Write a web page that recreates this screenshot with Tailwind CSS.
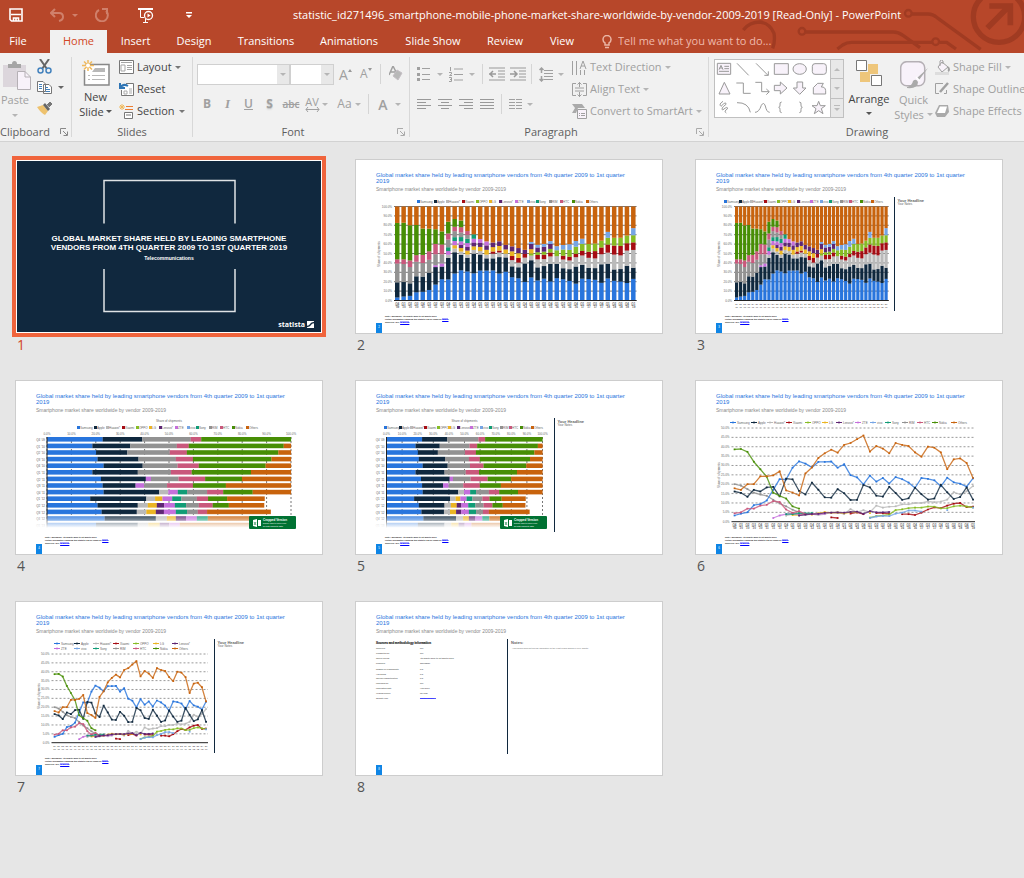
<!DOCTYPE html>
<html lang="en">

<head>
    <meta charset="UTF-8">
    <meta name="viewport" content="width=device-width, initial-scale=1.0">
    <title>PowerPoint - Slide Sorter</title>
    <script src="https://cdn.jsdelivr.net/npm/@tailwindcss/browser@4"></script>
</head>

<body class="min-h-screen overflow-x-hidden bg-[#e6e6e6] font-['Open_Sans','Noto_Sans',sans-serif] text-[11px] text-[#444]">

    <!-- Title bar and tabs -->
    <header class="relative overflow-hidden bg-[#b7472a] text-white">
        <svg class="absolute top-0 right-0 h-[53px] w-[344px]" viewBox="0 0 1032 159" fill="none" stroke="#a03b22" stroke-width="10">
            <circle cx="366" cy="94" r="10" stroke-width="7" />
            <path d="M377 96H640Q655 96 670 107L720 143" />
            <circle cx="685" cy="40" r="10" stroke-width="7" />
            <path d="M696 42H745Q758 42 770 52L902 148" />
            <circle cx="767" cy="125" r="10" stroke-width="7" />
            <path d="M756 127H515Q500 127 488 135L472 147M778 127H800L828 147" />
            <path d="M190 90Q208 66 240 66Q270 70 282 100Q286 125 278 145" />
            <circle cx="957" cy="50" r="77" stroke-width="16" />
            <path d="M922 84L984 22M928 18H991V76" stroke-width="17" />
        </svg>

        <div class="relative flex h-[30px] items-center">
            <div class="flex w-[170px] shrink-0 items-center pl-[9px]">
                <button aria-label="Save"><svg class="h-[14px] w-[14px]" viewBox="0 0 14 14" fill="none" stroke="#fff"><path d="M1 1H13V13H2.500L1 11.500Z" stroke-width="1.600" /><path d="M2 6.500H12M4.500 13V10H9.500V13M7 10V13" stroke-width="1.600" /></svg></button>
                <button aria-label="Undo" class="ml-[27px]"><svg class="h-[14px] w-[14px]" viewBox="0 0 14 14" fill="none" stroke="#d0806b" stroke-width="2"><path d="M5 1L1 5L5 9M1 5H9Q13 5 13 9Q13 12 9 13" /></svg></button>
                <span class="ml-[8px] border-x-[3px] border-t-[3px] border-x-transparent border-t-[#d0806b]"></span>
                <button aria-label="Redo" class="ml-[17px]"><svg class="h-[14px] w-[14px]" viewBox="0 0 14 14" fill="none" stroke="#d0806b" stroke-width="2"><path d="M4 2A6 6 0 1 0 11 3M7 1H12V6" /></svg></button>
                <button aria-label="Start From Beginning" class="ml-[29px]"><svg class="h-[15px] w-[16px]" viewBox="0 0 16 15" fill="none" stroke="#fff"><path d="M0 1H15" stroke-width="2" /><path d="M2.500 2V9.500H6M7.500 11V14M5 14.500H10" /><circle cx="10.500" cy="7.500" r="4" stroke-width="1.300" /><path d="M9.500 5.500V9.500L12.500 7.500Z" fill="#fff" stroke="none" /></svg></button>
            </div>
            <button aria-label="Customize Quick Access Toolbar" class="absolute left-[186px]"><svg class="h-[7px] w-[6px]" viewBox="0 0 6 7"><path d="M0 0H6V1.500H0ZM0 3H6L3 6Z" fill="#fff" /></svg></button>
            <h1 class="flex-1 text-center whitespace-nowrap">statistic_id271496_smartphone-mobile-phone-market-share-worldwide-by-vendor-2009-2019 [Read-Only] - PowerPoint</h1>
        </div>

        <nav class="relative flex h-[23px] items-center" aria-label="Tabs">
            <button class="w-[50px] pr-[14px] text-center">File</button>
            <button class="h-[23px] w-[57px] bg-[#f1f1f1] text-[#d24726]">Home</button>
            <button class="w-[57px]">Insert</button>
            <button class="w-[60px]">Design</button>
            <button class="w-[84px]">Transitions</button>
            <button class="w-[82px]">Animations</button>
            <button class="w-[86px]">Slide Show</button>
            <button class="w-[58px]">Review</button>
            <button class="w-[56px]">View</button>
            <svg class="ml-[12px] h-[14px] w-[10px]" viewBox="0 0 10 14" fill="none" stroke="#eab5a5" stroke-width="1.500"><path d="M3 10V8Q1 7 1 4.500A4 4 0 0 1 9 4.500Q9 7 7 8V10ZM3 12.500H7" /></svg>
            <input aria-label="Tell me" type="text" placeholder="Tell me what you want to do..." class="ml-[6px] w-[180px] bg-transparent outline-none placeholder:text-[#efb9aa]">
        </nav>
    </header>

    <!-- Ribbon -->
    <section class="flex h-[89px] overflow-hidden border-b border-[#d2d2d2] bg-[#f1f1f1] whitespace-nowrap" aria-label="Ribbon">

        <div class="flex w-[71px] shrink-0 flex-col">
            <div class="flex h-[70px]">
                <button class="flex w-[30px] flex-col items-center pt-[8px] text-[#a0a0a0]">
                    <svg class="ml-[3px] h-[29px] w-[28px]" viewBox="0 0 28 29"><path d="M0 4H23V26H0Z" fill="#dcd6dc" /><path d="M5 3H9Q9 0 11.500 0Q14 0 14 3H18V7H5Z" fill="#a5a5a5" /><path d="M14.500 10.500H22L27.500 16V28.500H14.500Z" fill="#f8f2fa" stroke="#b5b0b5" /><path d="M22 10.500V16H27.500" fill="none" stroke="#b5b0b5" /></svg>
                    <span class="leading-[20px]">Paste</span>
                    <span class="mt-[4px] border-x-[3px] border-t-[3px] border-x-transparent border-t-[#b5b5b5]"></span>
                </button>
                <div class="flex flex-col gap-[6px] pt-[6px] pl-[7px]">
                    <button aria-label="Cut"><svg class="h-[15px] w-[15px]" viewBox="0 0 15 15" fill="none"><path d="M3 0L10 10M12 0L5 10" stroke="#666" stroke-width="2" /><circle cx="3.500" cy="11.500" r="2.500" stroke="#4382bd" stroke-width="1.500" /><circle cx="11.500" cy="11.500" r="2.500" stroke="#4382bd" stroke-width="1.500" /></svg></button>
                    <button aria-label="Copy" class="flex items-center gap-[5px]"><svg class="h-[15px] w-[16px]" viewBox="0 0 16 15" fill="#fff" stroke="#777"><path d="M.5 1.500H6L8.500 4V11.500H.5ZM6.500 4.500H12L14.500 7V13.500H6.500Z" /><path d="M2 4.500H5M2 6.500H5M2 8.500H5M8.500 7.500H11M8.500 9.500H13M8.500 11.500H13" stroke="#4382bd" /></svg><span class="border-x-[3px] border-t-[3px] border-x-transparent border-t-[#666]"></span></button>
                    <button aria-label="Format Painter"><svg class="h-[15px] w-[16px]" viewBox="0 0 16 15"><path d="M0 6L6 4L11 10L8 14Q4 12 0 6Z" fill="#eec26e" /><path d="M6 4L8 2L13 8L11 10Z" fill="#666" /><path d="M10 4L13 1L15 3L12 6" fill="#777" stroke="#777" /></svg></button>
                </div>
            </div>
            <div class="flex items-center justify-between pr-[3px] leading-[19px] text-[#5e5e5e]"><span>Clipboard</span><svg class="h-[8px] w-[8px]" viewBox="0 0 8 8" fill="none" stroke="#888"><path d="M.5 6V.5H6M3 3L7 7M7.500 3.500V7.500H3.500" /></svg></div>
        </div>

        <div class="my-[4px] w-px shrink-0 bg-[#d8d8d8]"></div>
        <div class="flex w-[120px] shrink-0 flex-col">
            <div class="flex h-[70px]">
                <button class="flex w-[47px] flex-col items-center pt-[7px] leading-[15px]">
                    <svg class="mb-[3px] h-[26px] w-[28px]" viewBox="0 0 28 26" fill="none"><path d="M3.500 4.500H27V25H2.500V10" fill="#fff" stroke="#888" stroke-width="1.500" /><path d="M13 8H23V12H10ZM6 15H8V16H6ZM10 15H23V16H10ZM6 19H8V20H6ZM10 19H23V20H10Z" fill="#b8b8b8" /><path d="M6 0V11M0 5.500H12M2 1.500L10 9.500M10 1.500L2 9.500" stroke="#f0b95c" stroke-width="1.500" /><circle cx="6" cy="5.500" r="2" fill="#fff" /></svg>
                    <span>New</span>
                    <span class="flex items-center gap-[2px]">Slide <i class="border-x-[3px] border-t-[3px] border-x-transparent border-t-[#555]"></i></span>
                </button>
                <div class="flex flex-col pt-[3px]">
                    <button class="flex h-[22px] items-center gap-[3px]"><svg class="h-[14px] w-[15px]" viewBox="0 0 15 14" fill="none" stroke="#777"><path d="M.5.5H14.500V13.500H.5Z" fill="#fff" /><path d="M2 2.500H13M2 5H6V11H2ZM8 5.500H13M8 7.500H13M8 9.500H13" stroke="#a5a5a5" /></svg>Layout<i class="border-x-[3px] border-t-[3px] border-x-transparent border-t-[#777]"></i></button>
                    <button class="flex h-[22px] items-center gap-[3px]"><svg class="h-[14px] w-[15px]" viewBox="0 0 15 14" fill="none"><path d="M7 1.500H14.500V13.500H2.500V8" fill="#fff" stroke="#777" /><path d="M5 9H8V12H5ZM10 7H13M10 9H13M10 11H13" stroke="#aaa" /><path d="M1 1V6H6M1 6Q4 1 9 4" stroke="#2f75b5" stroke-width="2" /></svg>Reset</button>
                    <button class="flex h-[22px] items-center gap-[3px]"><svg class="h-[15px] w-[15px]" viewBox="0 0 15 15" fill="none"><path d="M7 2.500H14M6 5.500H14" stroke="#ed7d31" /><path d="M5.500 8.500H13.500V14.500H5.500ZM7 11H12" fill="#fff" stroke="#777" /><path d="M3 0V6M0 3H6M1 1L5 5M5 1L1 5" stroke="#f0b95c" /></svg>Section<i class="ml-px border-x-[3px] border-t-[3px] border-x-transparent border-t-[#777]"></i></button>
                </div>
            </div>
            <div class="text-center leading-[19px] text-[#5e5e5e]">Slides</div>
        </div>

        <div class="my-[4px] w-px shrink-0 bg-[#d8d8d8]"></div>
        <div class="flex w-[216px] shrink-0 flex-col text-[#a0a0a0]">
            <div class="h-[70px] pl-[4px]">
                <div class="flex h-[42px] items-center">
                    <div class="relative h-[21px] w-[93px]">
                        <select aria-label="Font" class="h-full w-full appearance-none border border-[#d0d0d0] bg-white"></select>
                        <span class="pointer-events-none absolute top-px right-px flex h-[19px] w-[12px] items-center justify-center bg-[#e8e8e8]"><i class="border-x-[3px] border-t-[3px] border-x-transparent border-t-[#b5b5b5]"></i></span>
                    </div>
                    <div class="relative h-[21px] w-[44px]">
                        <select aria-label="Font size" class="h-full w-full appearance-none border border-[#d0d0d0] bg-white"></select>
                        <span class="pointer-events-none absolute top-px right-px flex h-[19px] w-[12px] items-center justify-center bg-[#e8e8e8]"><i class="border-x-[3px] border-t-[3px] border-x-transparent border-t-[#b5b5b5]"></i></span>
                    </div>
                    <button class="ml-[5px] flex w-[14px] text-[14px]">A<i class="mt-[5px] h-0 border-x-[2px] border-b-[3px] border-x-transparent border-b-[#999]"></i></button>
                    <button class="ml-[7px] flex w-[14px] text-[12px]">A<i class="mt-[3px] h-0 border-x-[2px] border-t-[3px] border-x-transparent border-t-[#999]"></i></button>
                    <span class="ml-[6px] h-[20px] w-px bg-[#d5d5d5]"></span>
                    <button aria-label="Clear formatting" class="ml-[8px]"><svg class="h-[16px] w-[14px]" viewBox="0 0 14 16" fill="none" stroke="#a0a0a0"><path d="M0 9L4 0L8 8M2 6H6" stroke-width="1.500" /><path d="M8 4L13 7L9 14L4 10Z" fill="#b8b8b8" stroke="#c5bfc5" /></svg></button>
                </div>
                <div class="flex h-[18px] items-center text-[12px]">
                    <button class="w-[20px] font-bold">B</button>
                    <button class="w-[21px] font-['Liberation_Serif',serif] text-[13px] font-bold italic">I</button>
                    <button class="w-[21px] font-semibold underline">U</button>
                    <button class="w-[21px] font-bold text-shadow-sm">S</button>
                    <button class="w-[22px] text-[10px] font-semibold line-through">abc</button>
                    <button class="flex w-[20px] flex-col items-center text-[11px] leading-[11px]">AV<svg class="h-[5px] w-[15px]" viewBox="0 0 15 5" fill="none" stroke="#a0a0a0"><path d="M3 0L1 2.500L3 5M12 0L14 2.500L12 5M1 2.500H14" /></svg></button>
                    <i class="border-x-[3px] border-t-[3px] border-x-transparent border-t-[#b5b5b5]"></i>
                    <button class="ml-[6px] w-[21px]">Aa</button>
                    <i class="border-x-[3px] border-t-[3px] border-x-transparent border-t-[#b5b5b5]"></i>
                    <span class="ml-[7px] h-[20px] w-px bg-[#d5d5d5]"></span>
                    <button class="ml-[7px] w-[14px] text-[14px] font-semibold">A</button>
                    <i class="ml-[5px] border-x-[3px] border-t-[3px] border-x-transparent border-t-[#b5b5b5]"></i>
                </div>
            </div>
            <div class="flex items-center pr-[4px] leading-[19px] text-[#5e5e5e]"><span class="flex-1 pr-[4px] text-center">Font</span><svg class="h-[8px] w-[8px]" viewBox="0 0 8 8" fill="none" stroke="#aaa"><path d="M.5 6V.5H6M3 3L7 7M7.500 3.500V7.500H3.500" /></svg></div>
        </div>

        <div class="my-[4px] w-px shrink-0 bg-[#d8d8d8]"></div>
        <div class="flex w-[298px] shrink-0 flex-col text-[#a0a0a0]">
            <div class="flex h-[70px] pl-[7px]">
                <div class="w-[155px] shrink-0">
                    <div class="flex h-[42px] items-center">
                        <button aria-label="Bullets"><svg class="h-[14px] w-[13px]" viewBox="0 0 13 14" fill="#a0a0a0"><path d="M0 0H3V3H0ZM0 6H3V9H0ZM0 11H3V14H0ZM5 1H13V2H5ZM5 7H13V8H5ZM5 12H13V13H5Z" /></svg></button>
                        <i class="ml-[7px] border-x-[3px] border-t-[3px] border-x-transparent border-t-[#b5b5b5]"></i>
                        <button aria-label="Numbering" class="ml-[6px]"><svg class="h-[15px] w-[14px]" viewBox="0 0 14 15" fill="none" stroke="#a0a0a0"><path d="M1.500 0V4M0 5.500H2.500V7L.5 8.500H3M0 10.500H2.500V14.500H0M1 12.500H2.500M5 2H14M5 7.500H14M5 13H14" /></svg></button>
                        <i class="ml-[6px] border-x-[3px] border-t-[3px] border-x-transparent border-t-[#b5b5b5]"></i>
                        <span class="ml-[7px] h-[20px] w-px bg-[#d5d5d5]"></span>
                        <button aria-label="Decrease indent" class="ml-[6px]"><svg class="h-[14px] w-[16px]" viewBox="0 0 16 14" fill="none" stroke="#999"><path d="M0 1H16M9 4H16M9 7H16M9 10H16M0 13H16" /><path d="M0 7H7M4 4L1 7L4 10" stroke-width="1.500" /></svg></button>
                        <button aria-label="Increase indent" class="ml-[5px]"><svg class="h-[14px] w-[16px]" viewBox="0 0 16 14" fill="none" stroke="#999"><path d="M0 1H16M9 4H16M9 7H16M9 10H16M0 13H16" /><path d="M0 7H7M4 4L7 7L4 10" stroke-width="1.500" /></svg></button>
                        <span class="ml-[5px] h-[20px] w-px bg-[#d5d5d5]"></span>
                        <button aria-label="Line spacing" class="ml-[7px]"><svg class="h-[15px] w-[14px]" viewBox="0 0 14 15" fill="none" stroke="#a0a0a0"><path d="M2.500 1V6M.5 3L2.500 1L4.500 3M2.500 9V14M.5 12L2.500 14L4.500 12" stroke-width="1.500" /><path d="M5 3.500H14M5 6.500H14M5 9.500H14M5 12.500H14" /></svg></button>
                        <i class="ml-[5px] border-x-[3px] border-t-[3px] border-x-transparent border-t-[#b5b5b5]"></i>
                    </div>
                    <div class="flex h-[18px] items-center">
                        <button aria-label="Align left"><svg class="h-[11px] w-[14px]" viewBox="0 0 14 11" stroke="#999"><path d="M0 .5H14M0 3.500H9M0 6.500H14M0 9.500H9" /></svg></button>
                        <button aria-label="Center" class="ml-[7px]"><svg class="h-[11px] w-[14px]" viewBox="0 0 14 11" stroke="#999"><path d="M0 .5H14M3 3.500H11M0 6.500H14M3 9.500H11" /></svg></button>
                        <button aria-label="Align right" class="ml-[7px]"><svg class="h-[11px] w-[14px]" viewBox="0 0 14 11" stroke="#999"><path d="M0 .5H14M5 3.500H14M0 6.500H14M5 9.500H14" /></svg></button>
                        <button aria-label="Justify" class="ml-[7px]"><svg class="h-[11px] w-[14px]" viewBox="0 0 14 11" stroke="#999"><path d="M0 .5H14M0 3.500H14M0 6.500H14M0 9.500H14" /></svg></button>
                        <span class="ml-[7px] h-[20px] w-px bg-[#d5d5d5]"></span>
                        <button aria-label="Columns" class="ml-[7px]"><svg class="h-[11px] w-[13px]" viewBox="0 0 13 11" stroke="#a0a0a0"><path d="M0 .5H6M7 .5H13M0 3.500H6M7 3.500H13M0 6.500H6M7 6.500H13M0 9.500H6M7 9.500H13" /></svg></button>
                        <i class="ml-[5px] border-x-[3px] border-t-[3px] border-x-transparent border-t-[#b5b5b5]"></i>
                    </div>
                </div>
                <div class="flex flex-col pt-[3px]">
                    <button class="flex h-[22px] items-center gap-[3px]"><svg class="h-[15px] w-[15px]" viewBox="0 0 15 15" fill="none" stroke="#a0a0a0"><path d="M.5 1V15M4.500 1V15M8 9L11 1L14 9M9 6H13M8.500 10V15M12.500 10V15" /></svg>Text Direction<i class="border-x-[3px] border-t-[3px] border-x-transparent border-t-[#b5b5b5]"></i></button>
                    <button class="flex h-[22px] items-center gap-[3px]"><svg class="h-[15px] w-[15px]" viewBox="0 0 15 15" fill="none" stroke="#a0a0a0"><path d="M4 1.500H.5V13.500H4M11 1.500H14.500V13.500H11M7.500 0V5M5.500 2.500L7.500.5L9.500 2.500M7.500 10V15M5.500 12.500L7.500 14.500L9.500 12.500M3 6H12M3 9H12" /></svg>Align Text<i class="border-x-[3px] border-t-[3px] border-x-transparent border-t-[#b5b5b5]"></i></button>
                    <button class="flex h-[22px] items-center gap-[3px]"><svg class="h-[15px] w-[15px]" viewBox="0 0 15 15"><path d="M0 0H10L13 4H6L4 9H0L3 4Z" fill="#aaa" /><path d="M5.500 5.500H14.500V14.500H5.500Z" fill="#f8f2fa" stroke="#a0a0a0" /><path d="M7 9H8V10H7ZM9 9H13V10H9ZM7 11H8V12H7ZM9 11H13V12H9Z" fill="#a0a0a0" /></svg>Convert to SmartArt<i class="border-x-[3px] border-t-[3px] border-x-transparent border-t-[#b5b5b5]"></i></button>
                </div>
            </div>
            <div class="flex items-center pr-[4px] leading-[19px] text-[#5e5e5e]"><span class="flex-1 pr-[4px] text-center">Paragraph</span><svg class="h-[8px] w-[8px]" viewBox="0 0 8 8" fill="none" stroke="#aaa"><path d="M.5 6V.5H6M3 3L7 7M7.500 3.500V7.500H3.500" /></svg></div>
        </div>

        <div class="my-[4px] w-px shrink-0 bg-[#d8d8d8]"></div>
        <div class="flex w-[316px] flex-1 flex-col text-[#a0a0a0]">
            <div class="flex h-[70px] pl-[5px]">
                <div class="mt-[6px] flex h-[59px] w-[130px] shrink-0 border border-[#c0c0c0]">
                    <svg class="h-[57px] w-[115px] bg-white" viewBox="106 180 345 171" fill="#f8f2fa" stroke="#999" stroke-width="3">
                        <path d="M113 190H153V223H113ZM134 199H148M134 206H148M118 214H148" /><path d="M118 209L124 196L130 209M120 204H128" fill="none" />
                        <path d="M172 190L207 226M229 190L265 226M254 226H266V214" fill="none" />
                        <path d="M284 191H326V223H284Z" /><ellipse cx="360" cy="207" rx="20" ry="16" /><rect x="398" y="191" width="42" height="32" rx="8" />
                        <path d="M134 247L151 282H118Z" /><path d="M170 249H191V280H213M227 247H246V275H268M260 267L269 275L260 284" fill="none" />
                        <path d="M284 256H302V246L322 264L302 282V272H284ZM352 246H369V264H379L360 283L341 264H352ZM401 282V263L414 250H431L425 261Q437 260 438 272V282Z" />
                        <path d="M130 304Q116 313 124 319Q140 302 139 313Q122 326 129 330Q146 316 143 327Q131 334 140 339M172 308Q206 307 212 337M226 337Q238 337 245 316Q252 304 257 318Q261 337 270 337M306 306Q299 306 301 315Q302 321 297 322Q302 323 301 329Q299 338 306 338M359 306Q366 306 364 315Q363 321 368 322Q363 323 364 329Q366 338 359 338" fill="none" />
                        <path d="M417 304L422 317H437L425 326L430 341L417 332L404 341L409 326L397 317H412Z" />
                    </svg>
                    <div class="flex w-[13px] flex-col divide-y divide-[#c0c0c0] border-l border-[#c0c0c0] bg-[#e8e8e8]">
                        <button aria-label="Row up" class="flex flex-1 items-center justify-center"><i class="border-x-[3px] border-b-[3px] border-x-transparent border-b-[#bbb]"></i></button>
                        <button aria-label="Row down" class="flex flex-1 items-center justify-center"><i class="border-x-[3px] border-t-[3px] border-x-transparent border-t-[#bbb]"></i></button>
                        <button aria-label="More shapes" class="flex flex-1 flex-col items-center justify-center gap-[2px]"><b class="h-px w-[6px] bg-[#bbb]"></b><i class="border-x-[3px] border-t-[3px] border-x-transparent border-t-[#bbb]"></i></button>
                    </div>
                </div>
                <button class="ml-[2px] flex w-[46px] shrink-0 flex-col items-center pt-[7px] leading-[15px] text-[#444]">
                    <svg class="mb-[4px] h-[27px] w-[26px]" viewBox="0 0 26 27"><path d="M12 4H22V14H12ZM4 12H14V22H4Z" fill="#eec67b" /><path d="M.5.5H10.500V10.500H.5ZM15.500 15.500H25.500V25.500H15.500Z" fill="#fff" stroke="#777" /></svg>
                    <span>Arrange</span>
                    <i class="mt-[6px] border-x-[3px] border-t-[3px] border-x-transparent border-t-[#555]"></i>
                </button>
                <button class="flex w-[43px] shrink-0 flex-col items-center pt-[8px] leading-[15px]">
                    <svg class="mb-[3px] h-[28px] w-[28px]" viewBox="0 0 28 28"><rect x=".7" y=".7" width="24" height="24" rx="6" fill="#f8f2fa" stroke="#b5b0b5" stroke-width="1.500" /><path d="M28 7L19 19L17 17ZM7 26Q12 25 13 20Q16 17 18 21Q18 28 7 27Z" fill="#aaa" /><path d="M16 16L20 20" stroke="#fff" stroke-width="1.500" /></svg>
                    <span>Quick</span>
                    <span class="flex items-center gap-[3px]">Styles<i class="border-x-[3px] border-t-[3px] border-x-transparent border-t-[#b5b5b5]"></i></span>
                </button>
                <div class="flex flex-col pt-[3px]">
                    <button class="flex h-[22px] items-center gap-[3px]"><svg class="h-[15px] w-[15px]" viewBox="0 0 15 15" fill="none" stroke="#a0a0a0"><path d="M7 2L13 7L7 12L3 7ZM5 6V1Q6.500-1 8 1V4" fill="#f8f2fa" /><path d="M13 7Q15 10 13 11" stroke-width="2" /><path d="M0 13.500H14" stroke="#ddd" stroke-width="3" /></svg>Shape Fill<i class="border-x-[3px] border-t-[3px] border-x-transparent border-t-[#b5b5b5]"></i></button>
                    <button class="flex h-[22px] items-center gap-[3px]"><svg class="h-[14px] w-[15px]" viewBox="0 0 15 14" fill="none" stroke="#a0a0a0"><path d="M8 1.500H.5V11.500H4M9 11.500H11.500V8" /><path d="M5 10L13 1" stroke-width="2.500" /></svg>Shape Outline</button>
                    <button class="flex h-[22px] items-center gap-[3px]"><svg class="h-[13px] w-[15px]" viewBox="0 0 15 13"><path d="M4 0H13L14 7L10 12H2L0 8Z" fill="#aaa" /><path d="M5 1.500H12L10 8H2Z" fill="#fff" /></svg>Shape Effects</button>
                </div>
            </div>
            <div class="text-center leading-[19px] text-[#5e5e5e]">Drawing</div>
        </div>
    </section>

    <!-- Slide sorter -->
    <main>
        <ol id="slides" class="flex flex-wrap gap-x-[32px] pt-[17px] pl-[15px]">
            <li class="h-[221px] w-[308px]">
                <article class="relative h-[175px] border-2 border-white bg-[#10283e] font-['Liberation_Sans',sans-serif] font-bold text-white outline-4 -outline-offset-1 outline-[#f0643c]">
                    <svg class="absolute inset-0 h-full w-full" viewBox="2 2 304 171" fill="none" stroke="#dfe3e6" stroke-width="1.500"><path d="M89 64.500V21.500H220V64.500M89 110V152.500H220V110" /></svg>
                    <div class="relative flex h-full flex-col items-center pt-[73px] text-center">
                        <h2 class="text-[8px] leading-[9px]">GLOBAL MARKET SHARE HELD BY LEADING SMARTPHONE<br>VENDORS FROM 4TH QUARTER 2009 TO 1ST QUARTER 2019</h2>
                        <p class="mt-[3px] text-[5px] leading-[6px]">Telecommunications</p>
                        <div class="mt-auto mr-[7px] mb-[3px] flex items-center gap-[2px] self-end font-['Open_Sans',sans-serif] text-[7px] leading-[9px]">statista<svg class="h-[7px] w-[7px]" viewBox="0 0 7 7"><path d="M0 0H7V7H0Z" fill="#fff" /><path d="M0 5.500Q3 5 3.500 3.500Q4 2 7 1.500" stroke="#10283e" stroke-width="1.500" fill="none" /></svg></div>
                    </div>
                </article>
                <p class="pl-[2px] text-[14px] leading-[21px] text-[#d24726]">1</p>
            </li>
        </ol>
    </main>

    <script>
        const vendors = ['Samsung', 'Apple', 'Huawei*', 'Xiaomi', 'OPPO', 'LG', 'Lenovo*', 'ZTE', 'vivo', 'Sony', 'RIM', 'HTC', 'Nokia', 'Others'];
        const colors = ['#2875dd', '#0f283e', '#bababa', '#a60c13', '#87bc24', '#ebb523', '#5e2673', '#c56fdc', '#76a5e5', '#119c76', '#929292', '#c9587c', '#478e05', '#c8630d'];

        // share per quarter, Q4 '09 to Q1 '19; pad() puts the values at their first quarter
        const pad = (start, list) => Array.from({ length: 38 }, (_, i) => list[i - start + 1] || 0);
        const shares = [
            pad(1, [3.3, 4.3, 5, 8.8, 9.4, 11.3, 17, 22.7, 22.5, 28.8, 32.2, 31, 29, 31.9, 31.9, 32.1, 28.8, 30.7, 24.8, 23.7, 19.9, 24.6, 21.4, 23.3, 20.4, 23.8, 22.7, 20.9, 18, 23.3, 22.9, 22.1, 18.9, 23.5, 21, 20.3, 18.7, 23.1]),
            pad(1, [16.1, 15.4, 13.3, 17, 16.1, 18.3, 18.6, 13.5, 23, 22.6, 16.5, 14.5, 20.9, 17.1, 13, 12.8, 17.4, 15.2, 11.6, 11.7, 19.6, 18.3, 13.9, 13.4, 18.6, 15.3, 11.7, 12.5, 18.2, 14.7, 11.8, 12.4, 19.7, 15.7, 12.1, 13.2, 18.3, 11.8]),
            pad(9, [3.2, 4, 3.5, 3.5, 4, 3.6, 4, 5, 5, 4, 6.7, 5, 6.2, 5, 8.6, 7.5, 8, 8.2, 9.3, 9.3, 10, 10, 10.8, 10.4, 10.7, 11.8, 15.8, 14.6, 16.2, 19]),
            pad(16, [2.3, 2, 0, 4.3, 5, 4, 0, 4.6, 4.6, 4.2, 0, 4, 4, 3.6, 4.8, 6.5, 7.7, 7.2, 8.6, 9.6, 10, 7.8, 8]),
            pad(22, [2.2, 3, 3.3, 3.8, 6.2, 6.6, 7.2, 7.5, 7.5, 8.1, 8, 7.1, 7.2, 8.2, 8.6, 8.1, 7.6]),
            pad(10, [3.5, 3.7, 4.2, 3.8, 4.5, 5.1, 4.7, 4.9, 4.5, 5, 5, 0, 4.6]),
            pad(11, [3.2, 3.8, 4.1, 4.2, 4.7, 4.8, 4.9, 4.8, 5.2, 5.4, 4.2, 5.6, 5, 5, 5.2]),
            pad(7, [2, 3.3, 4, 4.5, 3.9, 4.2, 4, 4, 4.2]),
            pad(22, [2, 2.8, 3.1, 3, 4.3, 4.8, 6, 6, 5.4, 0, 0, 0, 6.2, 0, 0, 0, 7.5]),
            pad(9, [4, 4, 4.5, 4.5, 4.6]),
            pad(1, [20, 19.2, 17.4, 15.5, 14.5, 13.8, 11.7, 9.7, 8.2, 6.4, 5, 4.2]),
            pad(1, [4.5, 5, 7, 7, 8.6, 9, 11, 10.5, 6.5, 4.7, 5.6, 4]),
            pad(1, [38.6, 38.8, 37.3, 32, 28, 24, 15.5, 13.8, 12.4, 8.2, 7]),
        ];
        const others = [17.8, 17, 20, 20, 24.2, 24.2, 24.7, 26.9, 16.7, 15.6, 14, 25.8, 29, 34, 36.5, 38.4, 36.8, 41, 42, 44, 46, 37.4, 40.4, 39, 36.5, 42, 41, 40.4, 37, 34.7, 40, 39.5, 37, 28, 33.3, 33.8, 31.3, 23.3];

        // horizontal bars: vendor indexes and cumulative ends
        const rows = [
            [[0, 1, 10, 11, 12], [22.8, 39, 58.9, 63.2, 100]],
            [[0, 1, 10, 11, 12, 13], [18.6, 34.1, 53.2, 58.1, 97, 100]],
            [[0, 1, 10, 11, 12, 13], [20.1, 32.9, 50.3, 57.3, 94.8, 100]],
            [[0, 1, 10, 11, 12, 13], [20.7, 37.5, 52.8, 59.8, 92, 100]],
            [[0, 1, 10, 11, 12, 13], [23.2, 39.2, 53.5, 62.2, 89.6, 100]],
            [[0, 1, 10, 11, 12, 13], [18.6, 37.2, 50.8, 59.3, 83.6, 100]],
            [[0, 1, 7, 10, 11, 12, 13], [22.1, 40.5, 42.6, 53.9, 64.8, 79.9, 100]],
            [[0, 1, 7, 10, 11, 12, 13], [22.8, 36.3, 39.8, 49.2, 59.8, 73.3, 100]],
            [[0, 1, 2, 7, 9, 10, 11, 12, 13], [23.2, 46, 49.7, 53.6, 57.4, 65.6, 72.2, 84.3, 100]],
            [[0, 1, 2, 5, 7, 9, 10, 11, 12, 13], [17.7, 40.7, 44.3, 47.3, 51.3, 55.1, 61.4, 66, 73.8, 89.2]],
            [[0, 1, 2, 5, 6, 7, 9, 10, 11, 12, 13], [20.7, 37.2, 41.3, 45, 48, 52.4, 57, 62.2, 67.9, 74.5, 89]],
            [[0, 1, 2, 5, 6, 7, 9, 10, 11, 13], [22.4, 36.8, 40.7, 44.6, 47.9, 52.8, 57.4, 61.8, 65.6, 91.7]],
            [[0, 1, 2, 5, 6, 7, 9, 13], [23.6, 44.6, 49.1, 52.8, 57, 61.4, 65.9, 100]],
            [[0, 1, 2, 5, 6, 7, 13], [20.1, 37.2, 41.5, 46.2, 50.1, 54.4, 100]],
        ];

        const rect = (x, y, w, h, fill) => `<rect x="${x}" y="${y}" width="${w}" height="${h}" fill="${fill}"/>`;
        const line = (x1, y1, x2, y2, stroke, extra = '') => `<path d="M${x1} ${y1}L${x2} ${y2}" stroke="${stroke}" fill="none" ${extra}/>`;
        const text = (x, y, str, size = 3, extra = '') => `<text x="${x}" y="${y}" font-size="${size}" fill="#666" ${extra}>${str}</text>`;
        const quarter = i => ['Q4', 'Q1', 'Q2', 'Q3'][i % 4];
        const year = i => "'" + String(9 + Math.floor((i + 3) / 4)).padStart(2, '0');

        const wideLegend = [62, 79, 91, 107, 121, 134, 144, 160, 172, 181, 194, 205, 217, 231];
        const slimLegend = [29, 44, 55, 69, 82, 93, 102, 115, 125, 134, 145, 154, 165, 176];

        function legend(xs, y) {
            return vendors.map((v, i) => rect(xs[i], y - 1, 3, 3, colors[i]) + text(xs[i] + 3, y + 2, v)).join('');
        }

        function headlineColumn(x) {
            return line(x, 38, x, 152, '#10283e') + text(x + 3, 43, 'Your Headline', 4, 'font-weight="bold"') + text(x + 3, 46, 'Your Notes', 3);
        }

        function labelsBelow(x0, pitch, size) {
            let out = '';
            for (let i = 0; i < 38; i++) {
                const x = x0 + i * pitch;
                out += text(x, 146, quarter(i), size, 'text-anchor="middle" font-weight="bold"') + text(x, 149, year(i), size, 'text-anchor="middle" font-weight="bold"');
            }
            return out;
        }

        function columnChart(x0, pitch, width, xs) {
            const top = 47.5, height = 94, right = x0 + pitch * 37 + width;
            let out = legend(xs, 42);
            for (let g = 0; g <= 10; g++) {
                const y = top + height * g / 10;
                out += line(x0 - 1, y, right + 1, y, '#777') + text(x0 - 3, y + 1, (100 - g * 10) + '.0%', 3, 'text-anchor="end"');
            }
            for (let i = 0; i < 38; i++) {
                const x = x0 + i * pitch;
                let sum = 0;
                shares.forEach((s, v) => {
                    if (!s[i]) return;
                    sum += s[i];
                    out += rect(x, top + height * (1 - sum / 100), width, height * s[i] / 100 + .1, colors[v]);
                });
                out += rect(x, top, width, height * (1 - sum / 100), colors[13]);
            }
            out += line(x0 - 1, 141.5, right + 1, 141.5, '#222');
            out += text(0, 0, 'Share of shipments', 3, 'transform="translate(25 108) rotate(-90)"');
            return out + labelsBelow(x0 + width / 2, pitch, pitch > 5 ? 3 : 2);
        }

        function barChart(x0, width, xs, badgeX) {
            let out = text(x0 + width / 2, 42, 'Share of shipments', 3, 'text-anchor="middle"') + legend(xs, 47);
            for (let g = 0; g <= 10; g++) {
                const x = x0 + width * g / 10;
                out += line(x, 57, x, 140, '#777', 'stroke-dasharray="2 2"') + text(x, 54.5, g * 10 + '.0%', 3, 'text-anchor="middle"');
            }
            rows.forEach(([ids, ends], r) => {
                const y = 57 + r * 6.6;
                out += text(x0 - 2, y + 4, `${quarter(r)} ${year(r)}`, 3, 'text-anchor="end"');
                ids.forEach((v, k) => {
                    const from = k ? ends[k - 1] : 0;
                    out += rect(x0 + width * from / 100, y, width * (ends[k] - from) / 100 + .1, 4.6, colors[v]);
                });
            });
            out += line(x0, 57, x0, 148, '#222');
            out += `<rect x="18" y="133" width="${x0 + width - 12}" height="20" fill="url(#fade)"/>`;
            out += `<rect x="${badgeX}" y="136" width="47" height="13" rx="1" fill="#007233"/>`;
            out += `<path d="M${badgeX + 4} 140L${badgeX + 8} 139V147L${badgeX + 4} 146ZM${badgeX + 9} 140H${badgeX + 12}V146H${badgeX + 9}Z" fill="#fff"/><path d="M${badgeX + 5} 142L${badgeX + 7} 145M${badgeX + 7} 142L${badgeX + 5} 145" stroke="#007233" stroke-width=".6"/>`;
            out += `<g fill="#fff"><text x="${badgeX + 14}" y="140.5" font-size="3" font-weight="bold">Cropped Version</text><text x="${badgeX + 14}" y="144" font-size="2">Double click to open excel</text><text x="${badgeX + 14}" y="147" font-size="2">file with complete data</text></g>`;
            return out;
        }

        function lineChart(x0, x1, top, legendAt) {
            const bottom = 141.7, pitch = (x1 - x0) / 37;
            let out = '';
            vendors.forEach((v, i) => {
                const [x, y] = legendAt(i);
                out += line(x, y, x + 6, y, colors[i]) + `<circle cx="${x + 3}" cy="${y}" r="1" fill="${colors[i]}"/>` + text(x + 7, y + 1, v);
            });
            for (let g = 0; g <= 10; g++) {
                const y = top + (bottom - top) * g / 10;
                out += line(x0 - 3, y, x1 + 2, y, g === 10 ? '#222' : '#999', g === 10 ? '' : 'stroke-dasharray="2 2"') + text(x0 - 5, y + 1, (50 - g * 5) + '.0%', 3, 'text-anchor="end"');
            }
            const pts = (s, i) => `${(x0 + i * pitch).toFixed(1)} ${(bottom - s[i] / 50 * (bottom - top)).toFixed(1)}`;
            const series = [...shares, others];
            [2, 10, 0, 1, 3, 4, 5, 8, 7, 9, 11, 6, 12, 13].forEach(v => {
                const s = series[v];
                let d = '';
                s.forEach((n, i) => { if (n) d += (i && s[i - 1] ? 'L' : 'M') + pts(s, i); });
                out += `<path d="${d}" fill="none" stroke="${colors[v]}" stroke-width="1.3" stroke-opacity=".8" stroke-linejoin="round"/>`;
                s.forEach((n, i) => { if (n) out += `<path d="M${pts(s, i)}h.1" stroke="${colors[v]}" stroke-width="1.7" stroke-linecap="square"/>`; });
            });
            out += text(0, 0, 'Share of shipments', 3, 'transform="translate(25 108) rotate(-90)"');
            return out + labelsBelow(x0, pitch, pitch > 5 ? 3 : 2);
        }

        function sourceTable() {
            const info = [['Source(s)', 'IDC', 47], ['Conducted by', 'IDC', 52], ['Survey period', '4th quarter 2009 to 1st quarter 2019', 57], ['Region(s)', 'Worldwide', 62], ['Number of respondents', 'n.a.', 68], ['Age group', 'n.a.', 73], ['Special characteristics', 'n.a.', 77], ['Published by', 'IDC', 82], ['Publication date', 'April 2019', 87], ['Original source', 'idc.com', 92]];
            return text(21, 43, 'Sources and methodology information', 3, 'font-weight="bold" stroke="#222" stroke-width=".2"')
                + info.map(([k, v, y]) => text(21, y + 1, k, 2, 'font-weight="bold"') + text(65, y + 1, v, 2, 'font-weight="bold"')).join('')
                + text(21, 98, 'Website URL', 2, 'font-weight="bold"')
                + line(65, 97.5, 81, 97.5, '#5a5aff') + '<a href="#source"><text x="65" y="98" font-size="2" fill="#1a1aff">visit the website</text></a>'
                + line(152.5, 38, 152.5, 153, '#10283e')
                + text(156, 43, 'Notes:', 4, 'font-weight="bold"')
                + text(157, 48, '* The source does not provide information on the exact vendor shares in every quarter.', 2);
        }

        const sixLegend = i => [[35, 56, 72, 91, 110, 127, 141, 160, 175, 190, 207, 222, 237, 256][i], 42.5];
        const sevenLegend = i => [[39, 59, 78, 98, 118, 138, 157][i % 7], i < 7 ? 42.5 : 47.5];
        const charts = [
            columnChart(40, 6.38, 4.5, wideLegend),
            columnChart(40, 4.04, 3.2, slimLegend) + headlineColumn(199.5),
            barChart(32, 244, wideLegend, 234),
            barChart(31.5, 156, slimLegend, 145) + headlineColumn(199.5),
            lineChart(39.5, 278, 48, sixLegend),
            lineChart(39.5, 191, 53, sevenLegend) + headlineColumn(199.5),
            sourceTable(),
        ];

        charts.forEach((chart, i) => {
            const footer = i === 6 ? '' : `<div class="pl-[3px] text-[2px] leading-[3px] font-bold text-[#222]"><p>Note*: Worldwide; 4th quarter 2009 to 1st quarter 2019</p><p>Further information regarding this statistic can be found on <a href="#page8" class="bg-[#aaaaff] text-[#0000ff] underline">page 8</a>.</p><p>Source(s): IDC; <a href="#source" class="bg-[#aaaaff] text-[#0000ff] underline">ID 271496</a></p></div>`;
            document.getElementById('slides').insertAdjacentHTML('beforeend', `
                <li class="h-[221px] w-[308px]">
                    <article class="flex h-[175px] flex-col border border-[#cdcdcd] bg-white font-['Liberation_Sans',sans-serif]">
                        <div class="h-[35px] pt-[12px] pr-[20px] pl-[20px]">
                            <h2 class="text-[6px] leading-[6px] text-[#2875dd]">Global market share held by leading smartphone vendors from 4th quarter 2009 to 1st quarter<br>2019</h2>
                            <p class="mt-[2px] text-[5px] leading-[6px] text-[#8a8a8a]">Smartphone market share worldwide by vendor 2009-2019</p>
                        </div>
                        <svg class="h-[118px] w-full shrink-0" viewBox="1 36 306 118">
                            <defs><linearGradient id="fade" x2="0" y2="1"><stop stop-color="#fff" stop-opacity="0"/><stop offset=".75" stop-color="#fff"/></linearGradient></defs>
                            ${chart}
                        </svg>
                        <div class="flex flex-1 pt-[2px] pl-[20px]">
                            <span class="mt-auto flex h-[10px] w-[6px] justify-center bg-[#0f85e5] pt-[2px] text-[3px] leading-[4px] text-white">${i + 2}</span>
                            ${footer}
                        </div>
                    </article>
                    <p class="pl-[2px] text-[14px] leading-[21px] text-[#555]">${i + 2}</p>
                </li>`);
        });
    </script>
</body>

</html>
